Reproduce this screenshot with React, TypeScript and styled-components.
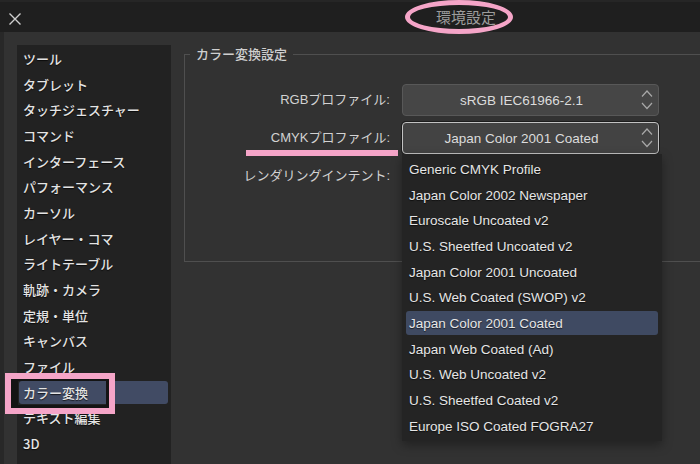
import React from "react";
import styled, { createGlobalStyle } from "styled-components";

const GlobalStyle = createGlobalStyle`
  html, body {
    margin: 0;
    padding: 0;
    background: #323232;
  }
  * {
    box-sizing: border-box;
  }
`;

const PINK = "#f5a5c8";

const Window = styled.div`
  width: 700px;
  height: 464px;
  overflow: hidden;
  display: flex;
  flex-direction: column;
  background: #323232;
  font-family: "Liberation Sans", "Noto Sans CJK JP", sans-serif;
  color: #e2e2e2;
`;

const TitleBar = styled.div`
  height: 32px;
  flex: none;
  display: flex;
  align-items: center;
  background: #1f1f1f;
  border-top: 2px solid #262626;
`;

const CloseButton = styled.div`
  width: 30px;
  height: 30px;
  display: flex;
  align-items: center;
  justify-content: center;
  margin-top: 3px;
`;

const Title = styled.div`
  position: relative;
  margin-left: 406px;
  font-family: "Noto Sans CJK JP", sans-serif;
  font-size: 15px;
  line-height: 30px;
  color: #9c9c9c;
`;

const TitleRing = styled.div`
  position: absolute;
  left: -31px;
  top: -2px;
  width: 108px;
  height: 34px;
  border: 5px solid ${PINK};
  border-radius: 50%;
`;

const Body = styled.div`
  flex: 1;
  display: flex;
  padding-top: 13px;
  border-left: 4px solid #282828;
  min-height: 0;
`;

const Sidebar = styled.div`
  position: relative;
  width: 154px;
  flex: none;
  display: flex;
  flex-direction: column;
  margin-left: 13px;
  padding-top: 0.5px;
  background: #222222;
`;

const SideItem = styled.div<{ $active?: boolean }>`
  height: 23px;
  flex: none;
  margin: 1.35px 3px 1.35px 2px;
  padding-left: 4px;
  display: flex;
  align-items: center;
  border-radius: 3px;
  font-family: "Noto Sans CJK JP", sans-serif;
  font-size: 13px;
  font-weight: 500;
  color: #e4e4e4;
  text-shadow: 0 1px 1px rgba(0, 0, 0, 0.7);
  background: ${(p) => (p.$active ? "#414b64" : "transparent")};
`;

const SideMark = styled.div`
  position: absolute;
  left: -12px;
  top: 328px;
  width: 110px;
  height: 41px;
  border: 6px solid ${PINK};
  pointer-events: none;
`;

const SideMarkInner = styled.div`
  width: 100%;
  height: 100%;
  border-style: solid;
  border-color: #141414;
  border-width: 2px 3px 3px 7px;
`;

const Main = styled.div`
  flex: 1;
  min-width: 0;
  overflow: hidden;
  padding-left: 13px;
`;

const Group = styled.fieldset`
  width: 600px;
  margin: 0;
  padding: 21px 0 69px 0;
  border: 1px solid #4f4f4f;
`;

const Legend = styled.legend`
  margin-left: 5px;
  padding: 0 6px;
  font-family: "Noto Sans CJK JP", sans-serif;
  font-size: 13px;
  font-weight: 500;
  line-height: 18px;
  color: #cfcfcf;
`;

const Form = styled.div`
  display: grid;
  grid-template-columns: 205px 257px;
  grid-template-rows: 32px 32px 32px;
  column-gap: 12px;
  row-gap: 6px;
`;

const Label = styled.div`
  position: relative;
  align-self: center;
  text-align: right;
  font-size: 13px;
  line-height: 18px;
  color: #d2d2d2;
`;

const Underline = styled.div`
  position: absolute;
  left: 61px;
  top: 21px;
  width: 152px;
  height: 6px;
  background: ${PINK};
`;

const SelectWrap = styled.div`
  position: relative;
`;

const Select = styled.div<{ $focused?: boolean }>`
  height: 32px;
  display: flex;
  align-items: center;
  padding: 0 4px 0 0;
  border-radius: 4px;
  border: 1px solid ${(p) => (p.$focused ? "#c2c2c2" : "#585858")};
  background: ${(p) => (p.$focused ? "#434343" : "#464646")};
  box-shadow: ${(p) => (p.$focused ? "0 0 0 1px #1c1c1c" : "none")};
`;

const SelectText = styled.div`
  flex: 1;
  text-align: center;
  font-size: 13.5px;
  color: #dcdcdc;
`;

const Dropdown = styled.div`
  position: absolute;
  left: 0;
  top: 32px;
  width: 260px;
  display: flex;
  flex-direction: column;
  padding: 2.5px 0 2px;
  background: #242424;
  box-shadow: 0 4px 10px rgba(0, 0, 0, 0.35);
`;

const Option = styled.div<{ $active?: boolean }>`
  height: 24px;
  flex: none;
  margin: 0.85px 4px;
  padding-left: 3px;
  display: flex;
  align-items: center;
  border-radius: 3px;
  font-size: 13.5px;
  color: #e6e6e6;
  text-shadow: 0 1px 1px rgba(0, 0, 0, 0.6);
  background: ${(p) => (p.$active ? "#3f4a62" : "transparent")};
`;

const Chevrons = () => (
  <svg width="14" height="22" viewBox="0 0 14 22" fill="none">
    <path d="M2 7.5 L7 2 L12 7.5" stroke="#a8a8a8" strokeWidth="1.2" />
    <path d="M2 14 L7 19.5 L12 14" stroke="#a8a8a8" strokeWidth="1.2" />
  </svg>
);

const CloseIcon = () => (
  <svg width="14" height="14" viewBox="0 0 14 14" fill="none">
    <path d="M1.5 1.5 L12.5 12.5 M12.5 1.5 L1.5 12.5" stroke="#cfcfcf" strokeWidth="1.4" />
  </svg>
);

const sideItems = [
  "ツール",
  "タブレット",
  "タッチジェスチャー",
  "コマンド",
  "インターフェース",
  "パフォーマンス",
  "カーソル",
  "レイヤー・コマ",
  "ライトテーブル",
  "軌跡・カメラ",
  "定規・単位",
  "キャンバス",
  "ファイル",
  "カラー変換",
  "テキスト編集",
  "3D",
];

const profiles = [
  "Generic CMYK Profile",
  "Japan Color 2002 Newspaper",
  "Euroscale Uncoated v2",
  "U.S. Sheetfed Uncoated v2",
  "Japan Color 2001 Uncoated",
  "U.S. Web Coated (SWOP) v2",
  "Japan Color 2001 Coated",
  "Japan Web Coated (Ad)",
  "U.S. Web Uncoated v2",
  "U.S. Sheetfed Coated v2",
  "Europe ISO Coated FOGRA27",
];

export default function App() {
  const current = "カラー変換";
  const cmyk = "Japan Color 2001 Coated";
  return (
    <>
      <GlobalStyle />
      <Window>
        <TitleBar>
          <CloseButton>
            <CloseIcon />
          </CloseButton>
          <Title>
            環境設定
            <TitleRing />
          </Title>
        </TitleBar>
        <Body>
          <Sidebar>
            {sideItems.map((name) => (
              <SideItem key={name} $active={name === current}>
                {name}
              </SideItem>
            ))}
            <SideMark>
              <SideMarkInner />
            </SideMark>
          </Sidebar>
          <Main>
            <Group>
              <Legend>カラー変換設定</Legend>
              <Form>
                <Label>RGBプロファイル:</Label>
                <Select>
                  <SelectText>sRGB IEC61966-2.1</SelectText>
                  <Chevrons />
                </Select>
                <Label>
                  CMYKプロファイル:
                  <Underline />
                </Label>
                <SelectWrap>
                  <Select $focused>
                    <SelectText>{cmyk}</SelectText>
                    <Chevrons />
                  </Select>
                  <Dropdown>
                    {profiles.map((p) => (
                      <Option key={p} $active={p === cmyk}>
                        {p}
                      </Option>
                    ))}
                  </Dropdown>
                </SelectWrap>
                <Label>レンダリングインテント:</Label>
                <div />
              </Form>
            </Group>
          </Main>
        </Body>
      </Window>
    </>
  );
}
